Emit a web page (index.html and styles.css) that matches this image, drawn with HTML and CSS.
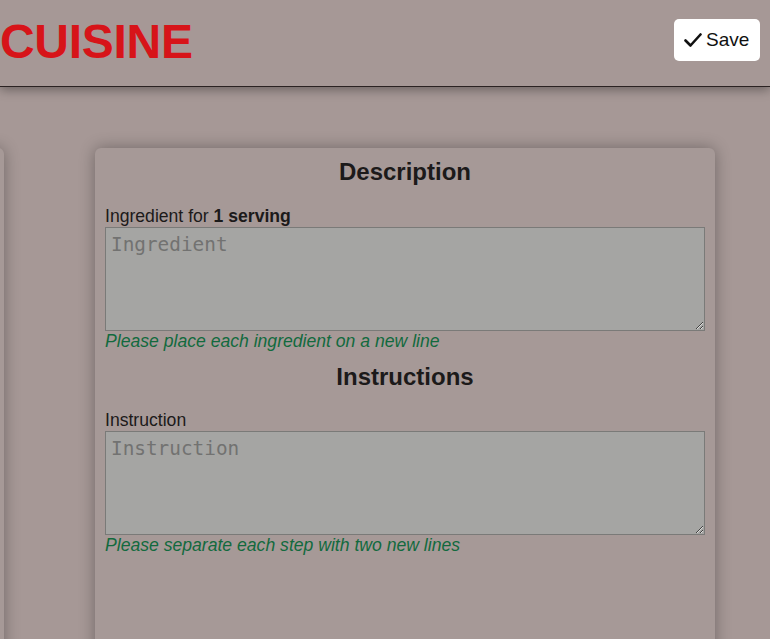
FILE: index.html
```html
<!DOCTYPE html>
<html>
<head>
<meta charset="utf-8">
<link rel="stylesheet" href="styles.css">
</head>
<body>
<header class="topbar">
  <h1 class="brand">CUISINE</h1>
  <button class="save-btn" type="button">
    <svg class="check" width="18" height="16" viewBox="0 0 18 16"><path d="M1.5 8.5 L6.5 13.5 L16.5 2.5" fill="none" stroke="#111" stroke-width="2.6" stroke-linecap="round" stroke-linejoin="round"/></svg>
    <span>Save</span>
  </button>
</header>
<main class="viewport">
  <div class="track">
    <section class="card"></section>
    <section class="card">
      <h2 class="card-title">Description</h2>
      <label class="field-label first">Ingredient for <b>1 serving</b></label>
      <textarea class="field" placeholder="Ingredient"></textarea>
      <p class="hint">Please place each ingredient on a new line</p>
      <h2 class="card-title second">Instructions</h2>
      <label class="field-label">Instruction</label>
      <textarea class="field" placeholder="Instruction"></textarea>
      <p class="hint">Please separate each step with two new lines</p>
    </section>
  </div>
</main>
</body>
</html>
```
FILE: styles.css
```css
html, body {
  margin: 0;
  padding: 0;
  height: 100%;
  overflow: hidden;
}
body {
  background: #a69896;
  font-family: "Liberation Sans", Arial, sans-serif;
  color: #1c1a1a;
}
.topbar {
  height: 86px;
  border-bottom: 1px solid #2a2222;
  box-shadow: 0 3px 10px rgba(0, 0, 0, 0.35);
  display: flex;
  align-items: center;
  justify-content: space-between;
  padding: 0 10px 0 0;
  position: relative;
  z-index: 2;
}
.brand {
  margin: 0;
  font-size: 48px;
  font-weight: bold;
  color: #d71419;
  letter-spacing: -0.3px;
  position: relative;
  top: -2px;
}
.save-btn {
  display: flex;
  align-items: center;
  gap: 4px;
  height: 42px;
  width: 86px;
  padding: 0 0 0 10px;
  background: #fff;
  border: none;
  border-radius: 5px;
  font-family: "Liberation Sans", Arial, sans-serif;
  font-size: 19px;
  color: #111;
  position: relative;
  top: -3px;
}
.check {
  display: block;
}
.viewport {
  padding-top: 61px;
}
.track {
  display: flex;
  gap: 91px;
  margin-left: -616px;
}
.card {
  flex: 0 0 620px;
  box-sizing: border-box;
  height: 600px;
  padding: 10px;
  background: #a69997;
  border-radius: 6px;
  box-shadow: 0 0 16px rgba(0, 0, 0, 0.32);
}
.card-title {
  margin: 0;
  text-align: center;
  font-size: 24px;
  font-weight: bold;
  color: #1c1a1a;
}
.card-title.second {
  margin-top: 12px;
}
.field-label {
  display: block;
  margin-top: 19px;
  font-size: 17.6px;
  line-height: 20px;
}
.field-label.first {
  margin-top: 20px;
}
.field {
  display: block;
  box-sizing: border-box;
  width: 600px;
  height: 104px;
  margin: 1px 0 0;
  padding: 5px 5px 3px;
  background: #a5a5a3;
  border: 1px solid #7a7a78;
  border-radius: 0;
  font-family: "DejaVu Sans Mono", monospace;
  font-size: 19.36px;
  color: #222;
  resize: vertical;
}
.field::placeholder {
  color: #727271;
}
.hint {
  margin: 0;
  font-size: 17.6px;
  line-height: 20px;
  font-style: italic;
  color: #126a3e;
}
```
